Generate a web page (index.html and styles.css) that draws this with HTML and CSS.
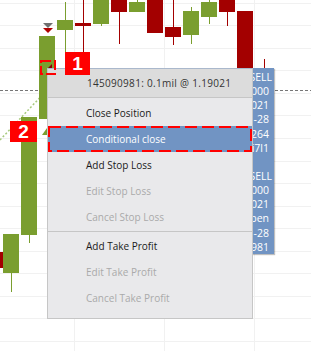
FILE: index.html
```html
<!DOCTYPE html>
<html lang="en">
<head>
    <meta charset="UTF-8" />
    <title>Position context menu</title>
    <link rel="stylesheet" href="styles.css">
</head>
<body>
<div class="chart">

    <!-- ===== price chart ===== -->
    <svg class="plot" width="311" height="351" viewBox="0 0 311 351">
        <g class="grid">
            <line x1="0" y1="3.5" x2="311" y2="3.5" />
            <line x1="0" y1="25.5" x2="311" y2="25.5" />
            <line x1="0" y1="48.5" x2="311" y2="48.5" />
            <line x1="0" y1="70.5" x2="311" y2="70.5" />
            <line x1="0" y1="93.5" x2="311" y2="93.5" />
            <line x1="0" y1="115.5" x2="311" y2="115.5" />
            <line x1="0" y1="138.5" x2="311" y2="138.5" />
            <line x1="0" y1="161.5" x2="311" y2="161.5" />
            <line x1="0" y1="183.5" x2="311" y2="183.5" />
            <line x1="0" y1="206.5" x2="311" y2="206.5" />
            <line x1="0" y1="228.5" x2="311" y2="228.5" />
            <line x1="0" y1="251.5" x2="311" y2="251.5" />
            <line x1="0" y1="273.5" x2="311" y2="273.5" />
            <line x1="0" y1="296.5" x2="311" y2="296.5" />
            <line x1="0" y1="318.5" x2="311" y2="318.5" />
            <line x1="0" y1="341.5" x2="311" y2="341.5" />
            <line x1="74.5" y1="0" x2="74.5" y2="351" />
            <line x1="164.5" y1="0" x2="164.5" y2="351" />
            <line x1="254.5" y1="0" x2="254.5" y2="351" />
        </g>

        <line class="trend" x1="0" y1="140" x2="47" y2="90" />
        <line class="level" x1="0" y1="90.5" x2="311" y2="90.5" />

        <!-- wicks -->
        <g class="wick up">
            <line x1="11.5" y1="273" x2="11.5" y2="292" />
            <line x1="29.5" y1="235" x2="29.5" y2="243" />
            <line x1="65.5" y1="2" x2="65.5" y2="70" />
            <line x1="101.5" y1="0" x2="101.5" y2="26" />
            <line x1="137.5" y1="0" x2="137.5" y2="2" />
            <line x1="191.5" y1="7" x2="191.5" y2="44" />
            <line x1="209.5" y1="0" x2="209.5" y2="24" />
        </g>
        <g class="wick down">
            <line x1="83.5" y1="0" x2="83.5" y2="70" />
            <line x1="119.5" y1="0" x2="119.5" y2="44" />
            <line x1="173.5" y1="0" x2="173.5" y2="45" />
            <line x1="227.5" y1="0" x2="227.5" y2="26" />
            <line x1="264.5" y1="59" x2="264.5" y2="90" />
        </g>

        <!-- bodies -->
        <g class="body up">
            <rect x="3" y="234" width="16" height="39" />
            <rect x="21" y="117" width="16" height="118" />
            <rect x="39" y="36" width="16" height="83" />
            <rect x="57" y="20" width="16" height="10" />
            <rect x="93" y="0" width="16" height="24" />
            <rect x="129" y="2" width="16" height="10" />
            <rect x="183" y="11" width="16" height="24" />
            <rect x="201" y="2" width="16" height="15" />
        </g>
        <g class="body down">
            <rect x="-13" y="252" width="16" height="16" />
            <rect x="75" y="23" width="16" height="3" />
            <rect x="111" y="0" width="16" height="12" />
            <rect x="147" y="0" width="16" height="33" />
            <rect x="165" y="27" width="16" height="10" />
            <rect x="219" y="0" width="16" height="12" />
            <rect x="237" y="11" width="16" height="80" />
        </g>

        <!-- trade markers -->
        <polygon class="mark-grey" points="43,23 53,23 48,28" />
        <polygon class="mark-red" points="43,28 53,28 48,33" />
        <polygon class="mark-entry" points="52,64 52,69 47,69" />
        <polygon class="mark-green" points="47,128 47,135 42,135" />
    </svg>

    <!-- ===== trade tooltip (only its right edge shows past the menu) ===== -->
    <div class="info-panel">
        <div class="info-row wide">SELL</div>
        <div class="info-row">000</div>
        <div class="info-row">021</div>
        <div class="info-row">-28</div>
        <div class="info-row">264</div>
        <div class="info-row">i7l1</div>
        <div class="info-row"></div>
        <div class="info-row wide">SELL</div>
        <div class="info-row">000</div>
        <div class="info-row">021</div>
        <div class="info-row">pen</div>
        <div class="info-row">-28</div>
        <div class="info-row">981</div>
    </div>

    <!-- ===== context menu ===== -->
    <div class="menu">
        <div class="menu-head">145090981: 0.1mil @ 1.19021</div>
        <ul class="menu-list">
            <li class="menu-item">Close Position</li>
            <li class="menu-item active">Conditional close</li>
            <li class="menu-item">Add Stop Loss</li>
            <li class="menu-item disabled">Edit Stop Loss</li>
            <li class="menu-item disabled">Cancel Stop Loss</li>
            <li class="menu-sep"></li>
            <li class="menu-item">Add Take Profit</li>
            <li class="menu-item disabled">Edit Take Profit</li>
            <li class="menu-item disabled">Cancel Take Profit</li>
        </ul>
    </div>

    <!-- ===== callouts ===== -->
    <svg class="callouts" width="311" height="351" viewBox="0 0 311 351">
        <rect class="dash-small" x="41" y="61" width="14" height="13" />
        <rect class="dash-wide" x="49" y="127" width="202" height="24" />
        <polygon class="pointer" points="57,68 65,58 65,68" />
    </svg>
    <div class="tag tag-1">1</div>
    <div class="tag tag-2">2</div>
</div>
</body>
</html>
```

FILE: styles.css
```css
:root {
    --up: #7a9e2f;
    --down: #a30000;
    --menu-bg: #e9e9eb;
    --menu-head: #dcdcdc;
    --menu-line: #c6c6c6;
    --hilite: #7194c3;
    --callout: #ff0000;
}

* {
    box-sizing: border-box;
}

body {
    margin: 0;
    width: 311px;
    height: 351px;
    overflow: hidden;
    background: #fff;
    font-family: "Open Sans", "Liberation Sans", sans-serif;
    font-size: 10px;
}

.chart {
    position: relative;
    width: 311px;
    height: 351px;
}

/* ====== chart ====== */
.plot {
    display: block;
}
.grid line {
    stroke: #f1f1f1;
    stroke-width: 1;
}
.trend {
    stroke: #a6c97c;
    stroke-width: 1.5;
    stroke-dasharray: 2 2;
}
.level {
    stroke: #777;
    stroke-width: 1;
    stroke-dasharray: 3 2;
}
.body rect {
    shape-rendering: crispEdges;
}
.body.up rect { fill: var(--up); }
.body.down rect { fill: var(--down); }
.wick line {
    stroke-width: 1;
    shape-rendering: crispEdges;
}
.wick.up line { stroke: var(--up); }
.wick.down line { stroke: var(--down); }

.mark-grey  { fill: #6f6f6f; }
.mark-red   { fill: #b00000; }
.mark-entry { fill: #8a0000; }
.mark-green { fill: var(--up); }

/* ====== tooltip ====== */
.info-panel {
    position: absolute;
    left: 248px;
    top: 68px;
    width: 26px;
    height: 186px;
    padding: 2px 5px 0 0;
    overflow: hidden;
    background: var(--hilite);
    color: #fff;
    font-size: 10.5px;
    line-height: 14.15px;
    white-space: nowrap;
    box-shadow: 1px 1px 1px rgba(0, 0, 0, 0.25);
}
.info-row {
    display: flex;
    justify-content: flex-end;
    height: 14.15px;
}
.info-row.wide {
    margin-right: -3px;
}

/* ====== menu ====== */
.menu {
    position: absolute;
    left: 47px;
    top: 68px;
    width: 206px;
    height: 251px;
    background: var(--menu-bg);
    border: 1px solid var(--menu-line);
    border-top-color: #aab8cc;
    color: #1a1a1a;
}
.menu-head {
    display: flex;
    align-items: center;
    height: 29px;
    padding-left: 39px;
    background: var(--menu-head);
    border-bottom: 1px solid var(--menu-line);
    color: #333;
    letter-spacing: 0.3px;
}
.menu-list {
    list-style: none;
    margin: 0;
    padding: 2px 0 0;
}
.menu-item {
    display: flex;
    align-items: center;
    height: 26px;
    padding-left: 38px;
}
.menu-item.active {
    background: var(--hilite);
    color: #fff;
}
.menu-item.disabled {
    color: #aaa;
}
.menu-sep {
    height: 1px;
    margin: 1px 0;
    background: var(--menu-line);
}

/* ====== callouts ====== */
.callouts {
    position: absolute;
    left: 0;
    top: 0;
    pointer-events: none;
}
.callouts rect {
    fill: none;
    stroke: var(--callout);
    stroke-width: 2;
    shape-rendering: crispEdges;
}
.dash-small { stroke-dasharray: 10 3; }
.dash-wide  { stroke-dasharray: 12 5; }
.pointer {
    fill: #fff;
}

.tag {
    position: absolute;
    display: flex;
    align-items: center;
    justify-content: center;
    background: var(--callout);
    color: #fff;
    font-family: "Liberation Sans", Arial, sans-serif;
    font-weight: bold;
    font-size: 19px;
}
.tag-1 {
    left: 65px;
    top: 52px;
    width: 25px;
    height: 23px;
}
.tag-2 {
    left: 10px;
    top: 121px;
    width: 27px;
    height: 21px;
}
```
